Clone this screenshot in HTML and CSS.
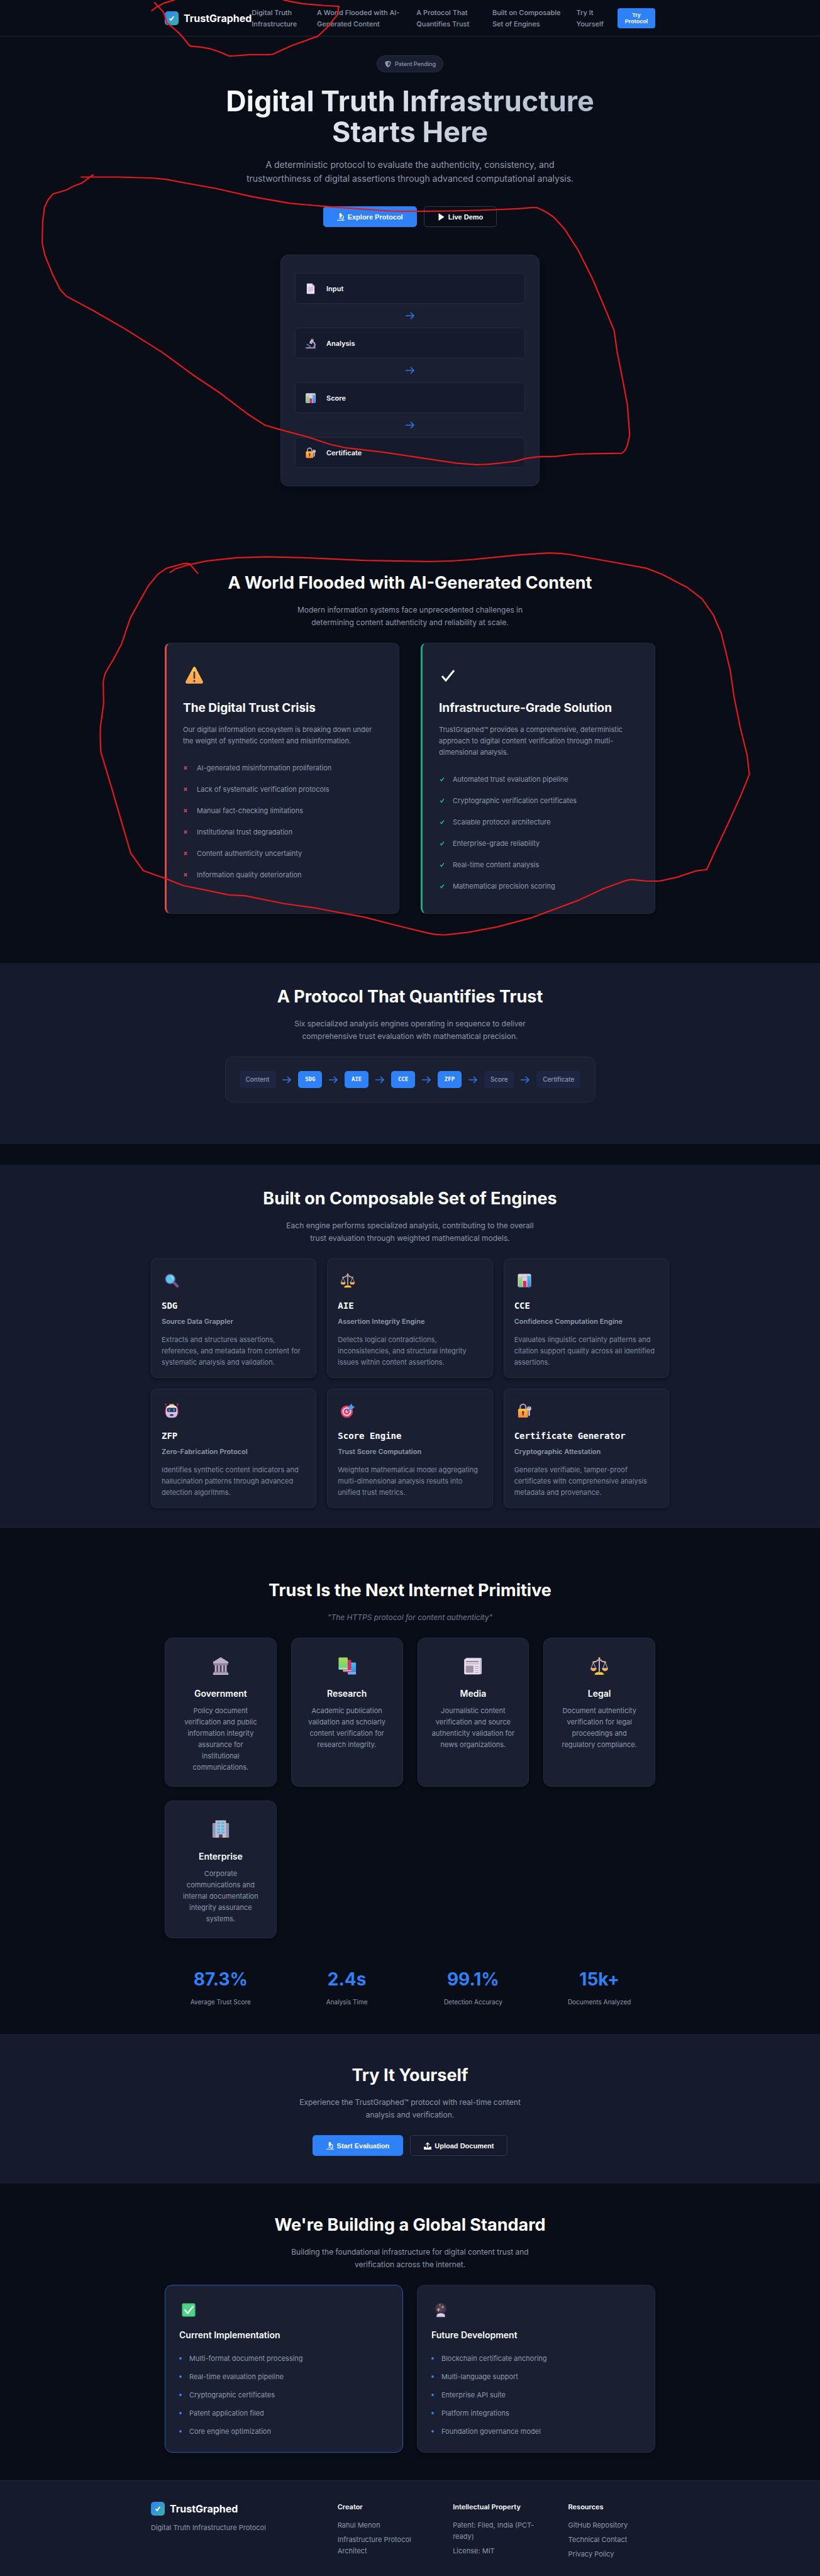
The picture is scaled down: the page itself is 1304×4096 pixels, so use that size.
FILE: index.html
```html
<!DOCTYPE html>
<html lang="en">
<head>
<meta charset="utf-8">
<meta name="viewport" content="width=device-width, initial-scale=1">
<title>TrustGraphed</title>
<link rel="stylesheet" href="styles.css">
</head>
<body>
<svg class="sprite" aria-hidden="true">
  <defs>
    <linearGradient id="g-lock" x1="0" y1="0" x2="0" y2="1"><stop offset="0" stop-color="#fbc13c"/><stop offset="1" stop-color="#f98746"/></linearGradient>
    <linearGradient id="g-warn" x1="0" y1="0" x2="0" y2="1"><stop offset="0" stop-color="#ffcb50"/><stop offset="1" stop-color="#ffa052"/></linearGradient>
    <linearGradient id="g-green" x1="0" y1="0" x2="0" y2="1"><stop offset="0" stop-color="#a9dd51"/><stop offset="1" stop-color="#5fd08b"/></linearGradient>
    <linearGradient id="g-blue" x1="0" y1="0" x2="0" y2="1"><stop offset="0" stop-color="#41c0f5"/><stop offset="1" stop-color="#3f7fdc"/></linearGradient>
    <linearGradient id="g-pale" x1="0" y1="0" x2="0" y2="1"><stop offset="0" stop-color="#f0e8f4"/><stop offset="1" stop-color="#c9aee3"/></linearGradient>
    <radialGradient id="g-ball"><stop offset="0" stop-color="#5d4d70"/><stop offset="1" stop-color="#3a3149"/></radialGradient>
  </defs>
  <symbol id="i-doc" viewBox="0 0 32 32"><path d="M5 3a1.500 1.500 0 0 1 1.500-1.500H20l7 7V29a1.500 1.500 0 0 1-1.500 1.500h-19A1.500 1.500 0 0 1 5 29z" fill="#e9dff0"/><path d="M20 1.500l7 7h-5.500A1.500 1.500 0 0 1 20 7z" fill="#c2b3cd"/><path d="M9 13h14M9 16.500h14M9 20h14M9 23.500h9" stroke="#b4a6c0" stroke-width="1.600"/></symbol>
  <symbol id="i-scope" viewBox="0 0 32 32"><path d="M20 11c10 3 10 12 4 17" fill="none" stroke="#b8aac2" stroke-width="3.500"/><path d="M5 18l11 8" stroke="#3f93dd" stroke-width="3"/><rect x="2" y="26.500" width="28" height="4" rx="1.500" fill="#9b86a5"/><path d="M19 3l6 3-6 12-7-3.500z" fill="#d6cbdd"/><path d="M19 1l6 3-1.500 3-6-3z" fill="#62566b"/><circle cx="20" cy="13" r="2.500" fill="#8f7f9b"/></symbol>
  <symbol id="i-chart" viewBox="0 0 32 32"><rect x="2" y="2" width="28" height="28" rx="3" fill="#dcd2e3"/><path d="M2 9h28M2 16h28M2 23h28M11.500 2v28M21 2v28" stroke="#bdb0c8" stroke-width=".8"/><path d="M4 10h7v20H5.500A2 2 0 0 1 4 28z" fill="url(#g-green)"/><rect x="13" y="17" width="7" height="13" rx="1" fill="#e0246b"/><path d="M22 6h7v22a2 2 0 0 1-2 2h-5z" fill="url(#g-blue)"/></symbol>
  <symbol id="i-lock" viewBox="0 0 32 32"><path d="M7 13V8.500a6 6 0 0 1 12 0V13" fill="none" stroke="#a89bb2" stroke-width="3"/><rect x="2.500" y="12" width="21" height="18.500" rx="2" fill="url(#g-lock)"/><path d="M13 17a2.600 2.600 0 0 1 1.500 4.700V26h-3v-4.300A2.600 2.600 0 0 1 13 17z" fill="#5c3844"/><circle cx="26" cy="11.500" r="4.500" fill="#cfc3da"/><path d="M24.500 14h3.200v11.500l-1.600 2-1.600-1.500z" fill="#cfc3da"/><circle cx="26" cy="9.800" r="1.200" fill="#64576d"/></symbol>
  <symbol id="i-warn" viewBox="0 0 32 32"><path d="M14.300 3.200a2 2 0 0 1 3.500 0l12 22.600A2.300 2.300 0 0 1 28 29H4a2.300 2.300 0 0 1-1.800-3.200z" fill="url(#g-warn)"/><path d="M16 11v9" stroke="#503b44" stroke-width="2.800" stroke-linecap="round"/><circle cx="16" cy="25" r="1.700" fill="#503b44"/></symbol>
  <symbol id="i-tick" viewBox="0 0 32 32"><path d="M3 17l6 7L22 8" fill="none" stroke="#fff" stroke-width="3"/></symbol>
  <symbol id="i-find" viewBox="0 0 32 32"><path d="M20 20l8 8" stroke="#7c4f91" stroke-width="6" stroke-linecap="round"/><circle cx="13" cy="13" r="11" fill="#7658a0"/><circle cx="13" cy="13" r="9" fill="#57c9ec"/><path d="M15 7q4 2 4 6" stroke="#a4e8fa" stroke-width="2" fill="none" stroke-linecap="round"/></symbol>
  <symbol id="i-scales" viewBox="0 0 32 32"><path d="M16 3v23" stroke="#cbbcd2" stroke-width="2"/><path d="M6 10l-4 10M6 10l4 10M26 10l-4 10M26 10l4 10" stroke="#bba9c4" stroke-width="1.200"/><path d="M6 9q6 0 7-3h6q1 3 7 3" fill="none" stroke="#cbbcd2" stroke-width="1.800"/><circle cx="6" cy="9.500" r="1.600" fill="#f7a940"/><circle cx="26" cy="9.500" r="1.600" fill="#f7a940"/><circle cx="16" cy="2.800" r="1.800" fill="#f7b93e"/><path d="M1 19.500h10.500a5.250 5.250 0 0 1-10.500 0zM20.500 19.500H31a5.250 5.250 0 0 1-10.500 0z" fill="#fbad5a"/><path d="M8 31q1-4 5-4.500h6q4 .5 5 4.500z" fill="#fac62e"/></symbol>
  <symbol id="i-robot" viewBox="0 0 32 32"><path d="M3.500 2v16M28.500 2v16" stroke="#b52a58" stroke-width="1.200"/><circle cx="3.500" cy="2.500" r="1.500" fill="#e8336b"/><circle cx="28.500" cy="2.500" r="1.500" fill="#e8336b"/><rect x="2" y="12" width="4" height="12" rx="2" fill="#e8336b"/><rect x="26" y="12" width="4" height="12" rx="2" fill="#e8336b"/><rect x="11" y="2" width="10" height="5" rx="1.500" fill="#f8b52e"/><rect x="4" y="4.500" width="24" height="26.500" rx="8" fill="url(#g-pale)"/><rect x="6" y="10" width="20" height="9" rx="3.500" fill="#37324f"/><rect x="9.500" y="12" width="3" height="5.500" rx="1.500" fill="#2aa5f5"/><rect x="19.500" y="12" width="3" height="5.500" rx="1.500" fill="#2aa5f5"/><rect x="12" y="23.500" width="8" height="3.500" rx="1.700" fill="#352c45"/></symbol>
  <symbol id="i-target" viewBox="0 0 32 32"><circle cx="14" cy="18" r="13" fill="#dd3a66"/><circle cx="14" cy="18" r="9.500" fill="#e6cfe0"/><circle cx="14" cy="18" r="6.500" fill="#dd3a66"/><circle cx="14" cy="18" r="3" fill="#e6cfe0"/><path d="M14 18L26 6" stroke="#2f7fd0" stroke-width="2.200"/><path d="M18 8l6-7 2 5 5 2-7 6-6 1z" fill="#3f9df0"/></symbol>
  <symbol id="i-gov" viewBox="0 0 32 32"><path d="M16 1l13 8v3H3V9z" fill="#b9b1c1"/><path d="M4 12h24v3H4z" fill="#94879f"/><path d="M6 15h20v11H6z" fill="#4d3f59"/><path d="M7.500 15v11M13 15v11M19 15v11M24.500 15v11" stroke="#bcb2c5" stroke-width="3"/><path d="M4 26h24v2H4z" fill="#a195ab"/><path d="M3 28h26v3H3z" fill="#c2b8ca"/></symbol>
  <symbol id="i-books" viewBox="0 0 32 32"><rect x="17" y="10" width="14" height="21" rx="1.500" fill="url(#g-blue)"/><path d="M17 28h14" stroke="#b6c3f0" stroke-width="1.800"/><rect x="9" y="5.500" width="14" height="21" rx="1.500" fill="#db2b62"/><path d="M9 24h14" stroke="#eec0d5" stroke-width="1.800"/><rect x="1.500" y="1.500" width="15.500" height="21" rx="1.500" fill="url(#g-green)"/><path d="M2 20h15" stroke="#c8e0c5" stroke-width="1.800"/></symbol>
  <symbol id="i-news" viewBox="0 0 32 32"><path d="M5 2h24a2 2 0 0 1 2 2v24a2 2 0 0 1-2 2H3.500A2 2 0 0 1 1.500 28V6z" fill="#cdbfd6"/><rect x="1.500" y="4" width="26.500" height="26" rx="1.500" fill="#ebe2f0"/><path d="M4 8.500h22" stroke="#998b9f" stroke-width="2.400"/><path d="M4 12.500h22M19.500 17h6.500M19.500 20.500h6.500M19.500 24h6.500M19.500 27h6.500" stroke="#b5a6bd" stroke-width="1.300"/><rect x="4" y="15.500" width="13" height="12" rx="1.500" fill="#9e91a8"/></symbol>
  <symbol id="i-office" viewBox="0 0 32 32"><rect x="2" y="6" width="28" height="25" rx="1" fill="#a195ae"/><rect x="7" y="1.500" width="18" height="29.500" rx="1" fill="#c3bacb"/><path d="M10 6h5M17 6h5M10 11.500h5M17 11.500h5M10 17h5M17 17h5M10 22h5M17 22h5" stroke="#48bdf0" stroke-width="3.400"/><path d="M3.500 11h2.500M3.500 16h2.500M3.500 21h2.500M26 11h2.500M26 16h2.500M26 21h2.500" stroke="#4aa4dd" stroke-width="2.500"/><rect x="13" y="25.500" width="6" height="5.500" fill="#4c3d59"/></symbol>
  <symbol id="i-done" viewBox="0 0 32 32"><rect x="2" y="2" width="28" height="28" rx="3" fill="#4fd487"/><rect x="3" y="3" width="26" height="26" rx="2" fill="none" stroke="#3fba70"/><path d="M8 16l6 7L25 9" fill="none" stroke="#fff" stroke-width="3" stroke-linecap="round"/></symbol>
  <symbol id="i-orb" viewBox="0 0 32 32"><circle cx="16" cy="13" r="12" fill="url(#g-ball)"/><path d="M8 25q8-4 16 0l1.500 6h-19z" fill="url(#g-pale)"/><path d="M11 11l1.200 3.200L15 15.500l-2.800 1.200L11 20l-1.200-3.300L7 15.500l2.800-1.300zM20 6l.9 2.600 2.600.9-2.600.9L20 13l-.9-2.600-2.600-.9 2.600-.9zM14 3l.6 1.600 1.600.6-1.600.6L14 7.500l-.6-1.700-1.600-.6 1.600-.6z" fill="#f9ae4f"/></symbol>
  <symbol id="i-arrow" viewBox="0 0 16 16"><path d="M1 8h13M9 3l5 5-5 5" fill="none" stroke="currentColor" stroke-width="1.600"/></symbol>
  <symbol id="i-mark" viewBox="0 0 16 16"><path d="M3.500 8.500l3 3.500 6-8" fill="none" stroke="currentColor" stroke-width="2.600"/></symbol>
  <symbol id="i-cross" viewBox="0 0 16 16"><path d="M3 4l7 8M10 4l-7 8" stroke="currentColor" stroke-width="2.600"/></symbol>
  <symbol id="i-shield" viewBox="0 0 16 16"><path d="M8 1q3 1.500 6 1.500Q14.500 11 8 15 1.500 11 2 2.500 5 2.500 8 1z" fill="currentColor"/><path d="M8.500 3.500q2 1 3.700 1Q12 9.500 8.500 12z" fill="#1a2032"/></symbol>
  <symbol id="i-scope-flat" viewBox="0 0 16 16"><rect x="5" y="0" width="4.500" height="9" rx="1" fill="currentColor"/><path d="M9 4q5 1 4.500 5.500Q13 13 10.500 14" fill="none" stroke="currentColor" stroke-width="1.600"/><path d="M4 11h7M0 15h16" stroke="currentColor" stroke-width="1.600"/></symbol>
  <symbol id="i-play" viewBox="0 0 16 16"><path d="M2 0l12 8-12 8z" fill="currentColor"/></symbol>
  <symbol id="i-upload" viewBox="0 0 16 16"><path d="M8 12V2M4 5.500L8 1.500l4 4" fill="none" stroke="currentColor" stroke-width="1.800"/><path d="M0 10h5v2h6v-2h5v6H0z" fill="currentColor"/></symbol>
</svg>

<header class="topbar">
  <div class="wrap topbar-row">
    <a class="logo" href="#top"><span class="logo-mark"><svg><use href="#i-mark"/></svg></span>TrustGraphed</a>
    <nav class="nav">
      <a href="#hero">Digital Truth Infrastructure</a>
      <a href="#world">A World Flooded with AI-Generated Content</a>
      <a href="#protocol">A Protocol That Quantifies Trust</a>
      <a href="#engines">Built on Composable Set of Engines</a>
      <a href="#try">Try It Yourself</a>
    </nav>
    <button class="btn-small" type="button">Try Protocol</button>
  </div>
</header>

<main>
<section class="hero" id="hero">
  <div class="badge"><svg><use href="#i-shield"/></svg>Patent Pending</div>
  <h1>Digital Truth Infrastructure Starts Here</h1>
  <p class="hero-sub">A deterministic protocol to evaluate the authenticity, consistency, and trustworthiness of digital assertions through advanced computational analysis.</p>
  <div class="actions">
    <button class="btn btn-primary" type="button"><svg><use href="#i-scope-flat"/></svg>Explore Protocol</button>
    <button class="btn btn-outline" type="button"><svg><use href="#i-play"/></svg>Live Demo</button>
  </div>
  <div class="steps">
    <div class="step"><svg><use href="#i-doc"/></svg>Input</div>
    <svg class="arrow"><use href="#i-arrow"/></svg>
    <div class="step"><svg><use href="#i-scope"/></svg>Analysis</div>
    <svg class="arrow"><use href="#i-arrow"/></svg>
    <div class="step"><svg><use href="#i-chart"/></svg>Score</div>
    <svg class="arrow"><use href="#i-arrow"/></svg>
    <div class="step"><svg><use href="#i-lock"/></svg>Certificate</div>
  </div>
</section>

<section class="section world" id="world">
  <h2>A World Flooded with AI-Generated Content</h2>
  <p class="lead">Modern information systems face unprecedented challenges in determining content authenticity and reliability at scale.</p>
  <div class="wrap versus">
    <article class="panel crisis">
      <svg class="panel-icon"><use href="#i-warn"/></svg>
      <h3>The Digital Trust Crisis</h3>
      <p>Our digital information ecosystem is breaking down under the weight of synthetic content and misinformation.</p>
      <ul>
        <li><svg><use href="#i-cross"/></svg>AI-generated misinformation proliferation</li>
        <li><svg><use href="#i-cross"/></svg>Lack of systematic verification protocols</li>
        <li><svg><use href="#i-cross"/></svg>Manual fact-checking limitations</li>
        <li><svg><use href="#i-cross"/></svg>Institutional trust degradation</li>
        <li><svg><use href="#i-cross"/></svg>Content authenticity uncertainty</li>
        <li><svg><use href="#i-cross"/></svg>Information quality deterioration</li>
      </ul>
    </article>
    <article class="panel solution">
      <svg class="panel-icon"><use href="#i-tick"/></svg>
      <h3>Infrastructure-Grade Solution</h3>
      <p>TrustGraphed™ provides a comprehensive, deterministic approach to digital content verification through multi-dimensional analysis.</p>
      <ul>
        <li><svg><use href="#i-mark"/></svg>Automated trust evaluation pipeline</li>
        <li><svg><use href="#i-mark"/></svg>Cryptographic verification certificates</li>
        <li><svg><use href="#i-mark"/></svg>Scalable protocol architecture</li>
        <li><svg><use href="#i-mark"/></svg>Enterprise-grade reliability</li>
        <li><svg><use href="#i-mark"/></svg>Real-time content analysis</li>
        <li><svg><use href="#i-mark"/></svg>Mathematical precision scoring</li>
      </ul>
    </article>
  </div>
</section>

<section class="section alt protocol" id="protocol">
  <h2>A Protocol That Quantifies Trust</h2>
  <p class="lead">Six specialized analysis engines operating in sequence to deliver comprehensive trust evaluation with mathematical precision.</p>
  <div class="pipeline">
    <span class="chip">Content</span><svg class="arrow"><use href="#i-arrow"/></svg>
    <span class="chip engine">SDG</span><svg class="arrow"><use href="#i-arrow"/></svg>
    <span class="chip engine">AIE</span><svg class="arrow"><use href="#i-arrow"/></svg>
    <span class="chip engine">CCE</span><svg class="arrow"><use href="#i-arrow"/></svg>
    <span class="chip engine">ZFP</span><svg class="arrow"><use href="#i-arrow"/></svg>
    <span class="chip">Score</span><svg class="arrow"><use href="#i-arrow"/></svg>
    <span class="chip">Certificate</span>
  </div>
</section>

<section class="section alt engines" id="engines">
  <h2>Built on Composable Set of Engines</h2>
  <p class="lead">Each engine performs specialized analysis, contributing to the overall trust evaluation through weighted mathematical models.</p>
  <div class="wrap-wide engine-grid">
    <article class="engine-card"><svg><use href="#i-find"/></svg><h3>SDG</h3><h4>Source Data Grappler</h4><p>Extracts and structures assertions, references, and metadata from content for systematic analysis and validation.</p></article>
    <article class="engine-card"><svg><use href="#i-scales"/></svg><h3>AIE</h3><h4>Assertion Integrity Engine</h4><p>Detects logical contradictions, inconsistencies, and structural integrity issues within content assertions.</p></article>
    <article class="engine-card"><svg><use href="#i-chart"/></svg><h3>CCE</h3><h4>Confidence Computation Engine</h4><p>Evaluates linguistic certainty patterns and citation support quality across all identified assertions.</p></article>
    <article class="engine-card"><svg><use href="#i-robot"/></svg><h3>ZFP</h3><h4>Zero-Fabrication Protocol</h4><p>Identifies synthetic content indicators and hallucination patterns through advanced detection algorithms.</p></article>
    <article class="engine-card"><svg><use href="#i-target"/></svg><h3>Score Engine</h3><h4>Trust Score Computation</h4><p>Weighted mathematical model aggregating multi-dimensional analysis results into unified trust metrics.</p></article>
    <article class="engine-card"><svg><use href="#i-lock"/></svg><h3>Certificate Generator</h3><h4>Cryptographic Attestation</h4><p>Generates verifiable, tamper-proof certificates with comprehensive analysis metadata and provenance.</p></article>
  </div>
</section>

<section class="section uses">
  <h2>Trust Is the Next Internet Primitive</h2>
  <p class="lead quote">"The HTTPS protocol for content authenticity"</p>
  <div class="wrap quad">
    <article class="use-card"><svg><use href="#i-gov"/></svg><h3>Government</h3><p>Policy document verification and public information integrity assurance for<br>institutional communications.</p></article>
    <article class="use-card"><svg><use href="#i-books"/></svg><h3>Research</h3><p>Academic publication validation and scholarly content verification for research integrity.</p></article>
    <article class="use-card"><svg><use href="#i-news"/></svg><h3>Media</h3><p>Journalistic content verification and source authenticity validation for news organizations.</p></article>
    <article class="use-card"><svg><use href="#i-scales"/></svg><h3>Legal</h3><p>Document authenticity verification for legal proceedings and regulatory compliance.</p></article>
    <article class="use-card"><svg><use href="#i-office"/></svg><h3>Enterprise</h3><p>Corporate communications and internal documentation integrity assurance systems.</p></article>
  </div>
  <div class="wrap quad stats">
    <div class="stat"><strong>87.3%</strong><span>Average Trust Score</span></div>
    <div class="stat"><strong>2.4s</strong><span>Analysis Time</span></div>
    <div class="stat"><strong>99.1%</strong><span>Detection Accuracy</span></div>
    <div class="stat"><strong>15k+</strong><span>Documents Analyzed</span></div>
  </div>
</section>

<section class="section alt" id="try">
  <h2>Try It Yourself</h2>
  <p class="lead">Experience the TrustGraphed™ protocol with real-time content analysis and verification.</p>
  <div class="actions">
    <button class="btn btn-primary" type="button"><svg><use href="#i-scope-flat"/></svg>Start Evaluation</button>
    <button class="btn btn-outline" type="button"><svg><use href="#i-upload"/></svg>Upload Document</button>
  </div>
</section>

<section class="section">
  <h2>We're Building a Global Standard</h2>
  <p class="lead">Building the foundational infrastructure for digital content trust and verification across the internet.</p>
  <div class="wrap roadmap">
    <article class="phase current">
      <svg><use href="#i-done"/></svg>
      <h3>Current Implementation</h3>
      <ul>
        <li>Multi-format document processing</li>
        <li>Real-time evaluation pipeline</li>
        <li>Cryptographic certificates</li>
        <li>Patent application filed</li>
        <li>Core engine optimization</li>
      </ul>
    </article>
    <article class="phase">
      <svg><use href="#i-orb"/></svg>
      <h3>Future Development</h3>
      <ul>
        <li>Blockchain certificate anchoring</li>
        <li>Multi-language support</li>
        <li>Enterprise API suite</li>
        <li>Platform integrations</li>
        <li>Foundation governance model</li>
      </ul>
    </article>
  </div>
</section>
</main>

<footer class="footer">
  <div class="wrap-wide footer-grid">
    <div>
      <a class="logo" href="#top"><span class="logo-mark"><svg><use href="#i-mark"/></svg></span>TrustGraphed</a>
      <p class="tagline">Digital Truth Infrastructure Protocol</p>
    </div>
    <div>
      <h4>Creator</h4>
      <ul><li>Rahul Menon</li><li>Infrastructure Protocol Architect</li></ul>
    </div>
    <div>
      <h4>Intellectual Property</h4>
      <ul><li>Patent: Filed, India (PCT-ready)</li><li>License: MIT</li></ul>
    </div>
    <div>
      <h4>Resources</h4>
      <ul><li><a href="#github">GitHub Repository</a></li><li><a href="#contact">Technical Contact</a></li><li><a href="#privacy">Privacy Policy</a></li></ul>
    </div>
  </div>
</footer>

<svg class="markup" viewBox="0 0 1788 5615" aria-hidden="true">
  <path d="M337 6L346 15 357 27 360 37 364 50 377 60 396 78 411 97Q414 101 420 101L440 103 457 106 476 112 497 121Q502 123 507 122L545 119 588 119Q595 119 600 116L637 99 693 79 713 60 735 33 739 14 706 12 660 8 637 4 618 0M380 0L357 7 342 15 331 23"/>
  <path d="M177 386L256 386 328 388 362 391 399 398 471 411 551 429 631 443 685 448 721 451 819 458Q855 461 890 461L980 460 1060 458 1131 455 1154 453Q1166 452 1172 453L1190 462 1207 473 1230 498 1261 546 1292 608 1319 672 1339 720 1346 769 1357 824 1368 883 1373 948 1368 971Q1362 986 1356 988L1292 989 1256 990 1212 995 1172 996 1149 999 1122 1006 1087 1010Q1063 1013 1039 1013L997 1010 917 998 837 986 752 976 721 969 672 953 605 935 578 927 542 904 480 857 426 821 355 769 274 718 203 677 145 646 131 631 115 599 98 557 92 530 93 484 97 452 104 437 115 423 145 414 160 406 179 399 203 381"/>
  <path d="M431 1250L413 1229Q406 1228 400 1229L363 1239 344 1252 323 1278 302 1315 284 1348 265 1404 247 1438 232 1463Q226 1475 225 1490L226 1533 219 1584Q218 1612 220 1640L242 1713 265 1792 285 1860 312 1898 360 1915 400 1931 451 1941 498 1951 535 1953 619 1970 684 1979 796 2000 870 2019 936 2035Q954 2039 973 2038L1019 2033 1084 2021 1159 2001 1261 1963 1317 1937 1364 1920Q1372 1917 1382 1918L1410 1921 1438 1921 1475 1913 1517 1899 1541 1896 1559 1856 1587 1797 1615 1735 1634 1688 1629 1646 1615 1590 1601 1522 1592 1460 1573 1382 1555 1340 1531 1306 1499 1281 1443 1252 1410 1239 1317 1222 1243 1209Q1215 1205 1187 1206L1131 1210 1029 1220Q973 1225 917 1224L796 1222 665 1216 582 1214 516 1216 451 1223 409 1232 381 1241 371 1248"/>
</svg>
</body>
</html>
```

FILE: styles.css
```css
* { box-sizing: border-box; margin: 0; padding: 0; }

body {
  position: relative;
  display: flex;
  flex-direction: column;
  min-height: 100vh;
  background: #080d18;
  color: #fff;
  font-family: Inter, "Liberation Sans", sans-serif;
  font-size: 11px;
  line-height: 18px;
}

a { color: inherit; text-decoration: none; }
ul { list-style: none; }
svg { display: block; flex: none; }
.sprite { position: absolute; width: 0; height: 0; }

.wrap { width: 100%; max-width: 780px; margin: 0 auto; }
.wrap-wide { width: 100%; max-width: 824px; margin: 0 auto; }

/* Header */
.topbar { border-bottom: 1px solid #1f2a3a; }
.topbar-row { display: flex; align-items: center; height: 57px; }
.logo { display: flex; align-items: center; gap: 8px; font-size: 16px; line-height: 22px; font-weight: 700; }
.logo-mark {
  display: flex; align-items: center; justify-content: center;
  width: 22px; height: 22px; border-radius: 5px;
  background: linear-gradient(135deg, #2f81f7, #38b2ac);
}
.logo-mark svg { width: 12px; height: 12px; }
.nav {
  flex: 1;
  display: grid;
  grid-template-columns: 82fr 137fr 99fr 112fr 43fr;
  column-gap: 22px;
  margin-right: 22px;
  color: #8d99ad;
  font-weight: 500;
}
.btn-small {
  width: 60px; padding: 6px 8px;
  border: 0; border-radius: 4px;
  background: #2f81f7; color: #fff;
  font: bold 9px/10px "Liberation Sans", Arial, sans-serif;
}

/* Hero */
.hero { display: flex; flex-direction: column; align-items: center; padding: 30px 0 88px; text-align: center; }
.badge {
  display: flex; align-items: center; gap: 5px;
  height: 27px; padding: 0 11px;
  border: 1px solid #262f42; border-radius: 14px;
  background: #1a2032; color: #8d99ad;
  font-size: 9px; font-weight: 500;
}
.badge svg { width: 12px; height: 12px; }
h1 {
  max-width: 640px; margin-top: 21px;
  font-size: 45px; line-height: 49px; font-weight: 700;
  background: linear-gradient(135deg, #fff, #a5b4c7);
  -webkit-background-clip: text; background-clip: text;
  color: transparent;
}
.hero-sub { max-width: 528px; margin-top: 17px; color: #8d99ad; font-size: 14px; line-height: 22px; }
.actions { display: flex; justify-content: center; gap: 11px; }
.hero .actions { margin-top: 33px; }
.btn {
  display: flex; align-items: center; gap: 5px;
  height: 33px; padding: 0 21px;
  border: 1px solid #2f81f7; border-radius: 5px;
  color: #fff;
  font: bold 11px/16px "Liberation Sans", Arial, sans-serif;
}
.btn svg { width: 12px; height: 12px; }
.btn-primary { background: #2f81f7; }
.btn-outline { background: transparent; border-color: #323a49; }

.arrow { width: 16px; height: 16px; color: #2f74e6; }
.steps {
  display: flex; flex-direction: column;
  width: 412px; max-width: 100%; margin-top: 44px; padding: 28px 22px;
  border: 1px solid #232c3d; border-radius: 12px;
  background: #1a2032;
  box-shadow: 0 4px 8px rgba(0, 0, 0, .3);
}
.step {
  display: flex; align-items: center; gap: 16px;
  height: 49px; padding: 0 15px;
  border: 1px solid #222c3b; border-radius: 6px;
  background: #151b2c; font-weight: 600;
}
.step svg { width: 18px; height: 18px; }
.steps .arrow { margin: 11px auto; }

/* Sections */
.section { padding: 49px 0 44px; }
.alt { background: #151b2c; }
h2 { font-size: 27px; line-height: 34px; font-weight: 700; text-align: center; }
.lead { max-width: 398px; margin: 16px auto 22px; color: #8d99ad; font-size: 12px; line-height: 20px; text-align: center; }

.world { padding-bottom: 78px; }
.versus { display: grid; grid-template-columns: 1fr 1fr; gap: 34px; }
.panel {
  padding: 31px 26px 26px;
  border: 1px solid #232c3d; border-left-width: 3px; border-radius: 9px;
  background: #1a2032;
  box-shadow: 0 3px 5px rgba(0, 0, 0, .3);
}
.crisis { border-left-color: #dc4a4a; }
.solution { border-left-color: #18ac7c; }
.panel-icon { width: 32px; height: 32px; margin: 4px 2px 0; }
.panel h3 { margin-top: 25px; font-size: 19px; line-height: 22px; font-weight: 700; }
.panel p { margin: 14px 0 17px; color: #8d99ad; }
.panel li { display: flex; align-items: center; gap: 12px; height: 34px; color: #8d99ad; }
.panel li svg { width: 10px; height: 10px; }
.crisis li svg { color: #dc4a4a; }
.solution li svg { color: #18b883; }

.protocol { padding: 37px 0 66px; }
.pipeline {
  display: flex; align-items: center; justify-content: space-between;
  width: 100%; max-width: 589px; margin: 0 auto; padding: 22px;
  border: 1px solid #232c3d; border-radius: 12px;
  background: #1a2032;
}
.chip {
  padding: 4px 10px 5px; border-radius: 5px;
  background: #1d2542; color: #8d99ad;
  font-size: 10px; font-weight: 500;
}
.chip.engine { padding: 4px 11px 5px; background: #2f81f7; color: #fff; font: bold 9px/18px "DejaVu Sans Mono", monospace; }

.engines { margin-top: 33px; padding: 37px 0 32px; }
.engine-grid { display: grid; grid-template-columns: repeat(3, 1fr); gap: 17px; }
.engine-card {
  padding: 16px 12px 15px 16px;
  border: 1px solid #232c3d; border-radius: 9px;
  background: #1a2032;
  box-shadow: 0 3px 5px rgba(0, 0, 0, .3);
}
.engine-card svg { width: 24px; height: 24px; margin: 6px 4px 0; }
.engine-card h3 { margin-top: 18px; font: bold 14px/20px "DejaVu Sans Mono", monospace; }
.engine-card h4 { margin: 7px 0 12px; color: #8d99ad; font-size: 11px; line-height: 16px; font-weight: 600; }
.engine-card p { color: #7f8ba1; }

.uses { padding: 82px 0 43px; }
.quote { color: #6f7b91; font-style: italic; }
.quad { display: grid; grid-template-columns: repeat(4, 1fr); gap: 22px 23px; }
.use-card {
  display: flex; flex-direction: column; align-items: center;
  padding: 22px 20px 21px;
  border: 1px solid #232c3d; border-radius: 12px;
  background: #1a2032; text-align: center;
  box-shadow: 0 3px 5px rgba(0, 0, 0, .3);
}
.use-card svg { width: 30px; height: 30px; margin: 7px; }
.use-card h3 { margin-top: 12px; font-size: 14px; line-height: 20px; font-weight: 600; }
.use-card p { margin-top: 8px; color: #8d99ad; }
.stats { margin-top: 48px; text-align: center; }
.stat strong { display: block; color: #2f81f7; font-size: 28px; line-height: 34px; font-weight: 700; }
.stat span { display: block; margin-top: 11px; color: #8d99ad; font-size: 10px; line-height: 16px; }

.roadmap { display: grid; grid-template-columns: 1fr 1fr; gap: 22px; }
.phase {
  padding: 22px 22px 19px;
  border: 1px solid #232c3d; border-radius: 12px;
  background: #1a2032;
  box-shadow: 0 3px 5px rgba(0, 0, 0, .3);
}
.phase.current { border-color: #2658a8; }
.phase svg { width: 24px; height: 24px; margin: 5px 3px 0; }
.phase h3 { margin: 18px 0 12px; font-size: 14px; line-height: 20px; font-weight: 600; }
.phase li { display: flex; align-items: center; gap: 12px; height: 29px; color: #8d99ad; }
.phase li::before { content: ""; width: 4px; height: 4px; border-radius: 50%; background: #2f81f7; }

/* Footer */
.footer { flex: 1; padding: 33px 0 24px; border-top: 1px solid #202a3a; background: #151b2c; }
.footer-grid { display: grid; grid-template-columns: 273fr 160fr 160fr 160fr; column-gap: 23px; color: #8d99ad; }
.footer .logo { color: #fff; }
.tagline { margin-top: 10px; }
.footer h4 { margin-bottom: 12px; color: #fff; font-size: 11px; line-height: 16px; font-weight: 600; }
.footer li + li { margin-top: 5px; }

/* Hand-drawn review marks over the page */
.markup { position: absolute; top: 0; left: 0; width: 100%; height: auto; pointer-events: none; }
.markup path { fill: none; stroke: #e31a1c; stroke-width: 3; stroke-linecap: round; stroke-linejoin: round; }
```
